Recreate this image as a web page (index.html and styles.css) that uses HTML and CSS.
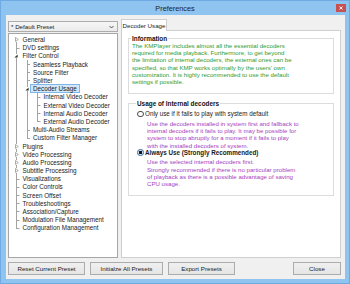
FILE: index.html
```html
<!DOCTYPE html>
<html lang="en">
<head>
  <meta charset="UTF-8" />
  <title>Preferences</title>
  <link rel="stylesheet" href="styles.css">
</head>
<body>
  <div class="window">
    <div class="titlebar">
      <span></span>
      <span class="title">Preferences</span>
      <span class="closeX">
        <svg width="4" height="4" viewBox="0 0 4 4"><path d="M0.5 0.5L3.5 3.5M3.5 0.5L0.5 3.5" stroke="#fff" stroke-width="0.9"/></svg>
      </span>
    </div>

    <div class="client">
      <div class="main">
        <div class="side">
          <div class="combo">
            <span>* Default Preset</span>
            <svg width="5" height="4" viewBox="0 0 5 4"><path d="M0.5 1L2.5 3L4.5 1" fill="none" stroke="#333" stroke-width="0.8"/></svg>
          </div>
          <div class="tree">
            <div class="row"><span class="cell exp first"><svg class="closed" width="4" height="5" viewBox="0 0 4 5"><path d="M0.5 0.5L3.3 2.5L0.5 4.5Z" fill="#fff" stroke="#8a8a8a" stroke-width="0.7"/></svg></span><span class="label">General</span></div>
            <div class="row"><span class="cell tee"></span><span class="label">DVD settings</span></div>
            <div class="row"><span class="cell exp"><svg class="open" width="4" height="4" viewBox="0 0 4 4"><path d="M3.6 0.4L3.6 3.6L0.4 3.6Z" fill="#333"/></svg></span><span class="label">Filter Control</span></div>
            <div class="row"><span class="guide pipe"></span><span class="cell tee"></span><span class="label">Seamless Playback</span></div>
            <div class="row"><span class="guide pipe"></span><span class="cell tee"></span><span class="label">Source Filter</span></div>
            <div class="row"><span class="guide pipe"></span><span class="cell tee"></span><span class="label">Splitter</span></div>
            <div class="row"><span class="guide pipe"></span><span class="cell exp"><svg class="open" width="4" height="4" viewBox="0 0 4 4"><path d="M3.6 0.4L3.6 3.6L0.4 3.6Z" fill="#333"/></svg></span><span class="label selected">Decoder Usage</span></div>
            <div class="row"><span class="guide pipe"></span><span class="guide pipe"></span><span class="cell tee"></span><span class="label">Internal Video Decoder</span></div>
            <div class="row"><span class="guide pipe"></span><span class="guide pipe"></span><span class="cell tee"></span><span class="label">External Video Decoder</span></div>
            <div class="row"><span class="guide pipe"></span><span class="guide pipe"></span><span class="cell tee"></span><span class="label">Internal Audio Decoder</span></div>
            <div class="row"><span class="guide pipe"></span><span class="guide pipe"></span><span class="cell end"></span><span class="label">External Audio Decoder</span></div>
            <div class="row"><span class="guide pipe"></span><span class="cell tee"></span><span class="label">Multi-Audio Streams</span></div>
            <div class="row"><span class="guide pipe"></span><span class="cell end"></span><span class="label">Custom Filter Manager</span></div>
            <div class="row"><span class="cell exp"><svg class="closed" width="4" height="5" viewBox="0 0 4 5"><path d="M0.5 0.5L3.3 2.5L0.5 4.5Z" fill="#fff" stroke="#8a8a8a" stroke-width="0.7"/></svg></span><span class="label">Plugins</span></div>
            <div class="row"><span class="cell exp"><svg class="closed" width="4" height="5" viewBox="0 0 4 5"><path d="M0.5 0.5L3.3 2.5L0.5 4.5Z" fill="#fff" stroke="#8a8a8a" stroke-width="0.7"/></svg></span><span class="label">Video Processing</span></div>
            <div class="row"><span class="cell exp"><svg class="closed" width="4" height="5" viewBox="0 0 4 5"><path d="M0.5 0.5L3.3 2.5L0.5 4.5Z" fill="#fff" stroke="#8a8a8a" stroke-width="0.7"/></svg></span><span class="label">Audio Processing</span></div>
            <div class="row"><span class="cell exp"><svg class="closed" width="4" height="5" viewBox="0 0 4 5"><path d="M0.5 0.5L3.3 2.5L0.5 4.5Z" fill="#fff" stroke="#8a8a8a" stroke-width="0.7"/></svg></span><span class="label">Subtitle Processing</span></div>
            <div class="row"><span class="cell tee"></span><span class="label">Visualizations</span></div>
            <div class="row"><span class="cell tee"></span><span class="label">Color Controls</span></div>
            <div class="row"><span class="cell tee"></span><span class="label">Screen Offset</span></div>
            <div class="row"><span class="cell tee"></span><span class="label">Troubleshootings</span></div>
            <div class="row"><span class="cell tee"></span><span class="label">Association/Capture</span></div>
            <div class="row"><span class="cell tee"></span><span class="label">Modulation File Management</span></div>
            <div class="row"><span class="cell end"></span><span class="label">Configuration Management</span></div>
          </div>
        </div>

        <div class="tabs">
          <div class="tabstrip"><div class="tab">Decoder Usage</div></div>
          <div class="panel">
            <fieldset class="group info">
              <legend>Information</legend>
              <p class="infoText">The KMPlayer includes almost all the essential decoders<br>required for media playback. Furthermore, to get beyond<br>the limitation of internal decoders, the external ones can be<br>specified, so that KMP works optimally by the users' own<br>customization. It is highly recommended to use the default<br>settings if possible.</p>
            </fieldset>
            <fieldset class="group usage">
              <legend>Usage of Internal decoders</legend>
              <div class="opt"><span class="radio"></span>Only use if it fails to play with system default</div>
              <p class="note">Use the decoders installed in system first and fallback to<br>internal decoders if it fails to play. It may be possible for<br>system to stop abruptly for a moment if it fails to play<br>with the installed decoders of system.</p>
              <div class="opt strong"><span class="radio on"></span>Always Use (Strongly Recommended)</div>
              <p class="note">Use the selected internal decoders first.<br>Strongly recommended if there is no particular problem<br>of playback as there is a possible advantage of saving<br>CPU usage.</p>
            </fieldset>
          </div>
        </div>
      </div>

      <div class="buttons">
        <button class="btn resetBtn">Reset Current Preset</button>
        <button class="btn initBtn">Initialze All Presets</button>
        <button class="btn exportBtn">Export Presets</button>
        <button class="btn closeBtn">Close</button>
      </div>
    </div>
  </div>
</body>
</html>
```

FILE: styles.css
```css
body {
  margin: 0;
  font-family: 'Liberation Sans', Arial, sans-serif;
  color: #1a1a1a;
  width: 350px;
  height: 284px;
  overflow: hidden;
}
.window {
  box-sizing: border-box;
  height: 284px;
  background: #8fc4f1;
  border: 1px solid #6fabe2;
  display: flex;
  flex-direction: column;
}
.titlebar {
  height: 14px;
  display: grid;
  grid-template-columns: 1fr auto 1fr;
  align-items: center;
}
.title {
  font-size: 7.3px;
  color: #222;
}
.closeX {
  justify-self: end;
  align-self: start;
  margin: 3px 3px 0 0;
  width: 10px;
  height: 8px;
  background: #c75050;
  display: flex;
  align-items: center;
  justify-content: center;
}
.closeX svg { display: block; }
.client {
  flex: 1;
  margin: 0 4px 4px 5px;
  background: #f0f0f0;
  padding: 4px 4px 4px 2px;
  display: flex;
  flex-direction: column;
}
.main {
  height: 239px;
  display: flex;
  gap: 3px;
}
.side {
  width: 110px;
  padding-top: 2px;
  display: flex;
  flex-direction: column;
}
.combo {
  box-sizing: border-box;
  height: 11px;
  border: 1px solid #acacac;
  background: linear-gradient(#f6f6f6, #ebebeb);
  font-size: 6.2px;
  display: flex;
  align-items: center;
  justify-content: space-between;
  padding: 0 3px 0 2px;
  margin-bottom: 1px;
}
.tree {
  flex: 1;
  background: #fff;
  border: 1px solid #a6a6a6;
  padding: 1.5px 0 0 2px;
  font-size: 6.3px;
}
.row {
  height: 8.2px;
  display: flex;
  align-items: center;
  white-space: nowrap;
}
.cell, .guide {
  flex: none;
  height: 100%;
  background-repeat: no-repeat;
}
.cell { width: 8.5px; }
.guide { width: 10.5px; }
.pipe {
  background-image: linear-gradient(#a3a3a3, #a3a3a3);
  background-position: 5px 0;
  background-size: 1px 100%;
}
.tee {
  background-image: linear-gradient(#a3a3a3, #a3a3a3), linear-gradient(#a3a3a3, #a3a3a3);
  background-position: 5px 0, 5px 4px;
  background-size: 1px 100%, 3.5px 1px;
}
.end {
  background-image: linear-gradient(#a3a3a3, #a3a3a3), linear-gradient(#a3a3a3, #a3a3a3);
  background-position: 5px 0, 5px 4px;
  background-size: 1px 4.5px, 3.5px 1px;
}
.exp {
  display: flex;
  align-items: center;
  background-image: linear-gradient(#a3a3a3, #a3a3a3);
  background-position: 5px 0;
  background-size: 1px 100%;
}
.exp.first {
  background-position: 5px 4px;
  background-size: 1px 100%;
}
.exp svg {
  display: block;
  background: #fff;
}
.exp .closed { margin-left: 3.5px; }
.exp .open { margin-left: 3px; }
.label {
  padding: 0 2px;
  line-height: 7px;
  border: 0.5px solid transparent;
}
.selected {
  background: #d3e7f9;
  border-color: #7cb6ea;
}
.tabs {
  width: 220px;
  display: flex;
  flex-direction: column;
}
.tabstrip {
  height: 12px;
  display: flex;
  margin-bottom: -1px;
  position: relative;
  z-index: 1;
}
.tab {
  box-sizing: border-box;
  width: 46px;
  height: 12px;
  background: #fff;
  border: 1px solid #cfcfcf;
  border-bottom: none;
  font-size: 6.2px;
  display: flex;
  align-items: center;
  justify-content: center;
}
.panel {
  flex: 1;
  background: #fff;
  border: 1px solid #cfcfcf;
  padding: 4px 6px 0 6px;
  font-size: 6.1px;
}
.group {
  margin: 0;
  border: 1px solid #dcdcdc;
  padding: 0 4px 8px 3px;
}
.group legend {
  font-weight: bold;
  font-size: 6.4px;
  line-height: 7px;
  padding: 0 1px;
  margin-left: -1px;
  color: #111;
}
.infoText {
  margin: 0;
  color: #2f9b2f;
  line-height: 7.2px;
  white-space: nowrap;
}
.usage {
  margin-top: 6px;
  padding: 3px 4px 8px 8px;
}
.opt {
  display: flex;
  align-items: center;
  height: 7.2px;
  font-size: 6.3px;
  white-space: nowrap;
}
.strong { font-weight: bold; }
.radio {
  box-sizing: border-box;
  width: 6.5px;
  height: 6.5px;
  border: 0.8px solid #4a4a4a;
  border-radius: 50%;
  background: #fff;
  margin-right: 1.5px;
}
.radio.on {
  background: radial-gradient(circle, #111 0 1.4px, #cfe0f1 1.9px);
  border-color: #3d6f9e;
}
.note {
  margin: 2.5px 0 0 10px;
  color: #a73dbd;
  line-height: 7.2px;
  white-space: nowrap;
}
.buttons {
  margin-top: 4px;
  height: 13px;
  display: flex;
  gap: 5px;
}
.btn {
  height: 13px;
  padding: 0;
  border: 1px solid #acacac;
  background: linear-gradient(#f0f0f0, #e5e5e5);
  font-family: 'Liberation Sans', Arial, sans-serif;
  font-size: 6.2px;
  color: #1a1a1a;
}
.resetBtn { width: 77px; }
.initBtn { width: 73px; }
.exportBtn { width: 67px; }
.closeBtn { width: 48px; margin-left: auto; }
```
